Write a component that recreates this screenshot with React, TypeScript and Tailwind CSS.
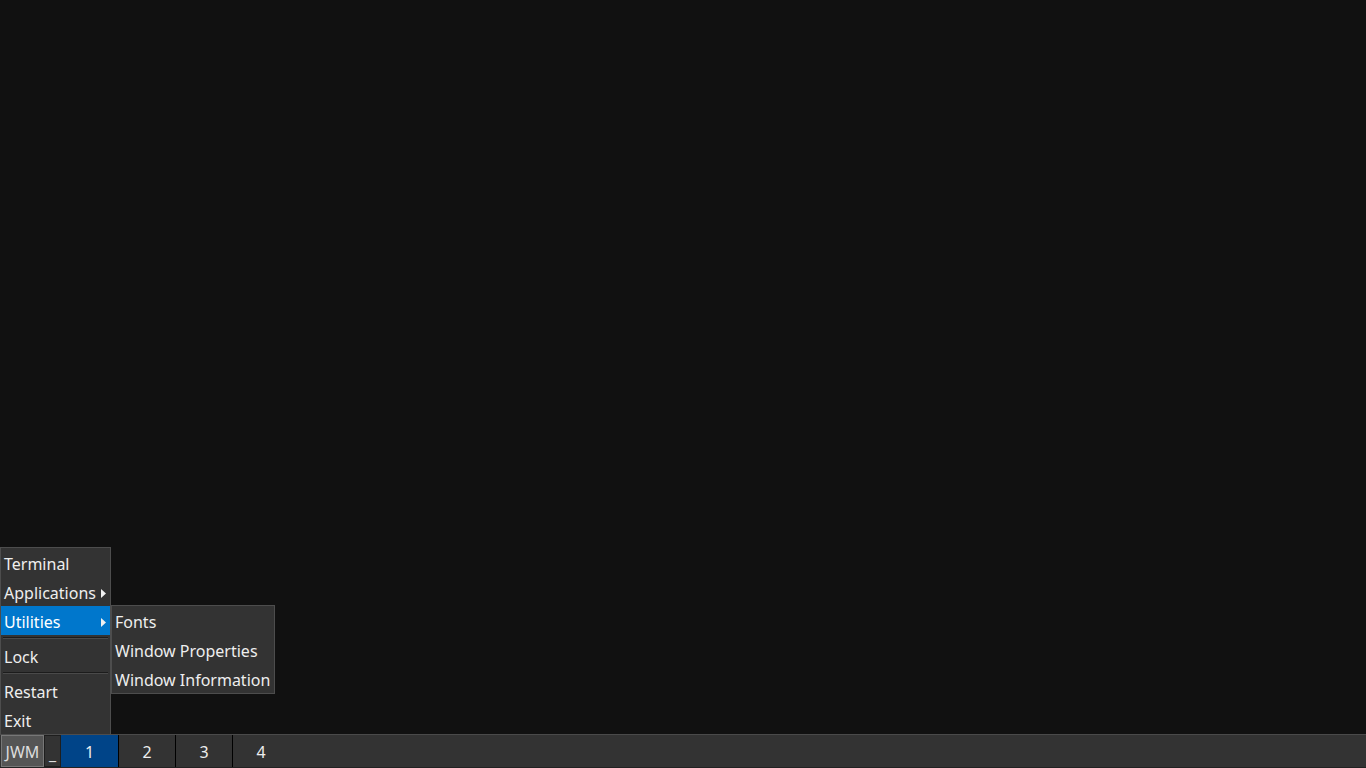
import React from "react";

function Arrow() {
  return (
    <svg width="5" height="9" viewBox="0 0 5 9" className="shrink-0 mt-[1px]">
      <path d="M0 0 L5 4.5 L0 9 Z" fill="#f0f0f0" />
    </svg>
  );
}

function Item({ label, arrow, active }: { label: string; arrow?: boolean; active?: boolean }) {
  return (
    <div
      className={`h-[29px] pl-[3px] pr-[4px] pt-[2px] flex items-center justify-between text-[16px] leading-none ${
        active ? "bg-[#0077cc] text-white" : "text-[#eeeeee]"
      }`}
    >
      <span className="whitespace-nowrap">{label}</span>
      {arrow && <Arrow />}
    </div>
  );
}

function Sep() {
  return (
    <div className="h-[6px] px-[2px] flex flex-col justify-center">
      <div className="h-[1px] bg-[#1c1c1c]" />
      <div className="h-[1px] bg-[#4a4a4a]" />
    </div>
  );
}

export default function App() {
  return (
    <div
      className="relative h-screen w-full overflow-hidden bg-[#111111] flex flex-col"
      style={{ fontFamily: "'Noto Sans', 'Open Sans', sans-serif" }}
    >
      <div className="flex-1" />

      {/* Root menu */}
      <div className="absolute left-0 top-[547px] w-[111px] bg-[#333333] border border-[#4d4d4d]">
        <Item label="Terminal" />
        <Item label="Applications" arrow />
        <Item label="Utilities" arrow active />
        <Sep />
        <Item label="Lock" />
        <Sep />
        <Item label="Restart" />
        <Item label="Exit" />
      </div>

      {/* Submenu */}
      <div className="absolute left-[111px] top-[605px] w-[164px] bg-[#333333] border border-[#4d4d4d]">
        <Item label="Fonts" />
        <Item label="Window Properties" />
        <Item label="Window Information" />
      </div>

      {/* Taskbar */}
      <div className="h-[34px] shrink-0 bg-[#333333] border-t border-[#4a4a4a] border-b border-b-[#222222] flex items-stretch text-[16px] leading-none">
        <div className="ml-[1px] w-[43px] pt-[2px] bg-[#555555] border border-[#777777] text-[#dddddd] flex items-center justify-center">
          JWM
        </div>
        <div className="w-[17px] bg-[#333333] border border-[#1e1e1e] text-[#dddddd] flex items-end justify-center pb-[4px]">
          _
        </div>
        <div className="flex items-stretch">
          <div className="w-[58px] pt-[2px] bg-[#004488] border-r border-black text-[#eeeeee] flex items-center justify-center">
            1
          </div>
          <div className="w-[57px] pt-[2px] border-r border-black text-[#eeeeee] flex items-center justify-center">2</div>
          <div className="w-[57px] pt-[2px] border-r border-black text-[#eeeeee] flex items-center justify-center">3</div>
          <div className="w-[56px] pt-[2px] text-[#eeeeee] flex items-center justify-center">4</div>
        </div>
        <div className="flex-1" />
      </div>
    </div>
  );
}
